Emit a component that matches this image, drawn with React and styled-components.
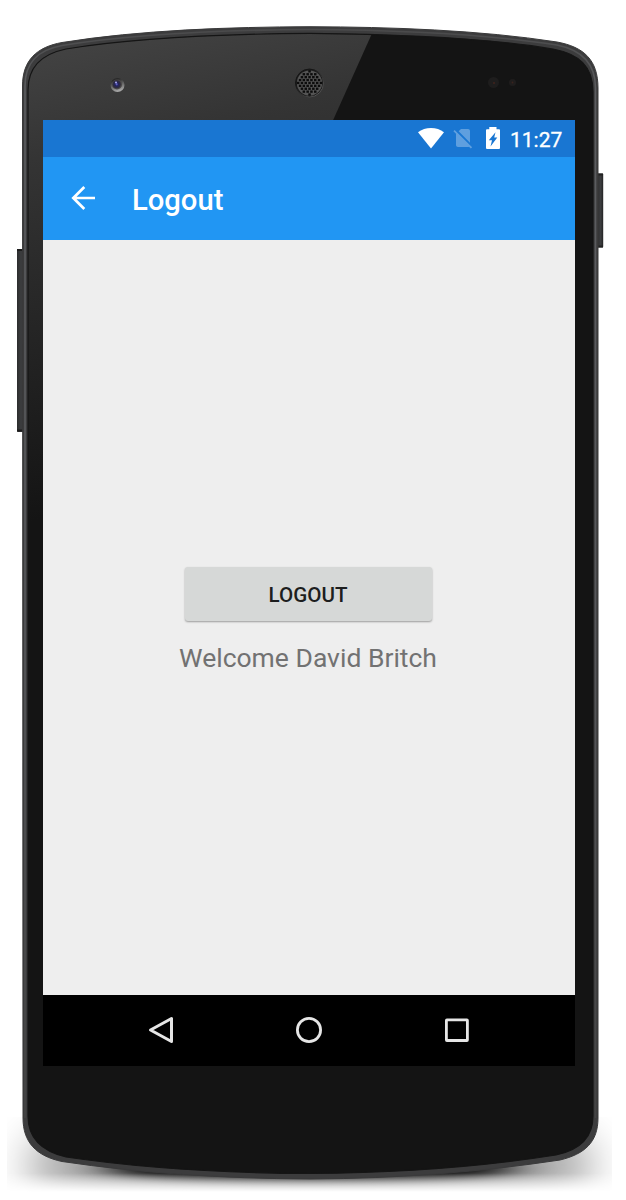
import React from "react";
import styled, { createGlobalStyle } from "styled-components";

const GlobalStyle = createGlobalStyle`
  * { box-sizing: border-box; }
  body { margin: 0; background: #fff; font-family: Roboto, "Liberation Sans", sans-serif; }
`;

const Phone = styled.main`
  display: grid;
  width: 626px;
  height: 1200px;
  overflow: hidden;
`;

const DeviceArt = styled.svg`
  grid-area: 1 / 1;
  display: block;
`;

const Screen = styled.section`
  grid-area: 1 / 1;
  z-index: 1;
  display: flex;
  flex-direction: column;
  width: 532px;
  height: 945.5px;
  margin: 120px 0 0 43px;
  background: #eee;
`;

const StatusBar = styled.div`
  display: flex;
  align-items: center;
  justify-content: flex-end;
  flex: 0 0 37px;
  padding-right: 12px;
  background: #1976d2;
  color: #fff;
`;

const Clock = styled.time`
  margin-left: 10px;
  padding-top: 2px;
  width: 53px;
  font-size: 21px;
  line-height: 24px;
  white-space: nowrap;
  -webkit-text-stroke: 0.3px #fff;
`;

const StatusIcon = styled.svg`
  display: block;
  flex: none;
  margin-left: ${(p) => p.$gap || 0}px;
  margin-bottom: 1px;
  opacity: ${(p) => (p.$dim ? 0.3 : 1)};
`;

const AppBar = styled.header`
  display: flex;
  align-items: center;
  flex: 0 0 83px;
  padding: 0 28px;
  background: #2196f3;
  color: #fff;
`;

const BackButton = styled.button`
  display: flex;
  padding: 0 0 2px;
  border: 0;
  background: none;
  color: inherit;
`;

const Title = styled.h1`
  margin: 3px 0 0 35px;
  font-size: 29.2px;
  font-weight: 500;
  line-height: 36px;
`;

const Content = styled.div`
  display: flex;
  flex-direction: column;
  align-items: center;
  flex: 1;
  padding: 327px 2px 0 0;
`;

const LogoutButton = styled.button`
  width: 247px;
  height: 54px;
  padding: 1px 0 0;
  border: 0;
  border-radius: 3px;
  background: #d6d8d7;
  box-shadow: 0 1px 2px rgba(0, 0, 0, 0.35);
  color: #1d1e1e;
  font-family: inherit;
  font-size: 20.6px;
  font-weight: 500;
`;

const Welcome = styled.p`
  margin: 21px 0 0;
  color: #727272;
  font-size: 26.5px;
  line-height: 32px;
  white-space: nowrap;
`;

const NavBar = styled.nav`
  display: flex;
  align-items: center;
  justify-content: center;
  gap: 118px;
  flex: 0 0 70.5px;
  padding-bottom: 1px;
  background: #000;
`;

const NavButton = styled.button`
  display: flex;
  padding: 0;
  border: 0;
  background: none;
`;

const body =
  "M22.5 86C22.5 60 37 47 62 42.5C140 30 230 27 310 26.7C390 27 480 30 557 42C584 47 598 60 598 88V1118C598 1142 585 1154 560 1160C480 1172 400 1178.5 310 1179C220 1178.5 140 1173 62 1161.5C36 1156 23 1142 23 1118Z";
const face =
  "M28 90C28 66 42 54 66 49C140 37 230 34 310 33.3C390 34 480 37 553 49C579 54 593 66 593 92V1116C593 1137 580 1150 556 1155C480 1167 400 1173 310 1173.5C220 1173 140 1168 66 1157C41 1151 28 1138 28 1116Z";

const grilleHoles = [];
for (let row = -4; row <= 4; row += 1) {
  for (let col = -4; col <= 4; col += 1) {
    const x = col * 3.8 + (row % 2 ? 1.9 : 0);
    const y = row * 2.9;
    if (Math.hypot(x, y) < 12) grilleHoles.push([x, y]);
  }
}

function Device() {
  return (
    <DeviceArt width="626" height="1200" viewBox="0 0 626 1200" aria-hidden="true">
      <defs>
        <linearGradient id="sheen" gradientUnits="userSpaceOnUse" x1="120" y1="20" x2="220" y2="480">
          <stop offset="0" stopColor="#444" />
          <stop offset=".25" stopColor="#343434" />
          <stop offset="1" stopColor="#141414" />
        </linearGradient>
        <linearGradient id="side">
          <stop offset="0" stopColor="#2b2c2d" />
          <stop offset=".6" stopColor="#3d3e40" />
          <stop offset="1" stopColor="#222" />
        </linearGradient>
        <radialGradient id="lens">
          <stop offset="0" stopColor="#6767d8" />
          <stop offset=".4" stopColor="#24245f" />
          <stop offset="1" stopColor="#302c38" />
        </radialGradient>
        <linearGradient id="lensRim" x1="0" y1="0" x2=".3" y2="1">
          <stop offset=".2" stopColor="#292929" />
          <stop offset="1" stopColor="#a5a5a5" />
        </linearGradient>
        <linearGradient id="grilleRim" x1="0" y1="0" x2="1" y2="1">
          <stop offset=".3" stopColor="#151515" />
          <stop offset="1" stopColor="#666" />
        </linearGradient>
        <linearGradient id="rim" gradientUnits="userSpaceOnUse" x1="0" y1="28" x2="0" y2="1118">
          <stop offset="0" stopColor="#4a4a4b" />
          <stop offset=".06" stopColor="#5c5d60" />
          <stop offset=".6" stopColor="#56575a" />
          <stop offset="1" stopColor="#444" />
        </linearGradient>
        <filter id="soft" x="-30%" y="-100%" width="160%" height="300%">
          <feGaussianBlur stdDeviation="22 5" />
        </filter>
        <filter id="wide" x="-30%" y="-100%" width="160%" height="300%">
          <feGaussianBlur stdDeviation="18 24" />
        </filter>
        <clipPath id="faceClip"><path d={face} /></clipPath>
        <linearGradient id="fade" x1="0" y1="0" x2="0" y2="1">
          <stop offset="0" stopColor="#fff" />
          <stop offset=".82" stopColor="#fff" />
          <stop offset="1" stopColor="#000" />
        </linearGradient>
        <mask id="shadowMask"><rect x="7" y="1088" width="605" height="104" fill="url(#fade)" /></mask>
      </defs>

      <g mask="url(#shadowMask)">
        <ellipse cx="310" cy="1165" rx="290" ry="40" fill="#000" opacity=".48" filter="url(#wide)" />
        <ellipse cx="310" cy="1169" rx="205" ry="13" fill="#000" opacity=".9" filter="url(#soft)" />
      </g>

      <rect x="17" y="249" width="7" height="183" rx="1" fill="url(#side)" />
      <path d="M17 250H23M17 430.500H23" stroke="#1d1d1d" strokeWidth="2" />
      <rect x="597" y="173.500" width="6.200" height="74" rx="1" fill="url(#side)" />
      <path d="M598 174.500H603M598 246.500H603" stroke="#222" strokeWidth="2" />

      <path d={body} fill="#3c3c3d" />
      <path d={body} fill="none" stroke="#3a3a3b" strokeWidth="1" />
      <path d="M25 1118V86C25 62 38 50 62 45.500C140 33 230 30 310 29.500C390 30 480 33 557 45C582 50 595.500 63 595.500 88V1118" fill="none" stroke="url(#rim)" strokeWidth="1.6" />
      <path d={face} fill="#141414" />
      <g clipPath="url(#faceClip)">
        <path d="M20 20H378L28 800H20Z" fill="url(#sheen)" />
      </g>
      <path d={face} fill="none" stroke="#151515" strokeWidth="1.200" />

      <circle cx="117.500" cy="85" r="7" fill="url(#lensRim)" />
      <circle cx="117" cy="84.500" r="5" fill="#4a4848" />
      <circle cx="116.700" cy="84.300" r="4" fill="url(#lens)" />
      <circle cx="116" cy="82.500" r="1" fill="#aaaaf0" />

      <circle cx="309.500" cy="83" r="14" fill="#1c1c1c" stroke="url(#grilleRim)" strokeWidth="1" />
      <circle cx="309.500" cy="83" r="12.600" fill="#555" />
      <g transform="translate(308.300 81.800)" fill="#0c0c0c">
        {grilleHoles.map(([x, y]) => (
          <rect key={x + "," + y} x={x} y={y} width="2.500" height="2.300" />
        ))}
      </g>

      <circle cx="493.500" cy="82.500" r="5.500" fill="#1e1d1d" />
      <circle cx="494" cy="83" r="1" fill="#42231c" />
      <circle cx="512.500" cy="82.500" r="3.500" fill="#1f1d1d" />
      <circle cx="512.500" cy="82.500" r=".9" fill="#3b231d" />
    </DeviceArt>
  );
}

export default function App() {
  return (
    <>
      <GlobalStyle />
      <Phone>
        <Device />
        <Screen>
          <StatusBar>
            <StatusIcon width="26" height="22" viewBox="0 0 26 22">
              <path d="M0 5.200C7 -.5 19 -.5 26 5.200L13 21.400Z" fill="#fff" />
            </StatusIcon>
            <StatusIcon width="24" height="24" viewBox="0 0 24 24" $gap={7} $dim>
              <path fill="#fff" d="M18.990 5c0-1.100-.89-2-1.990-2h-7L7.660 5.340 19 16.680 18.990 5zM3.650 3.880L2.380 5.150 5 7.770V19c0 1.100.9 2 2 2h10.010c.35 0 .67-.1.960-.26l1.880 1.880 1.270-1.270L3.650 3.880z" />
            </StatusIcon>
            <StatusIcon width="14" height="22" viewBox="0 0 14 22" $gap={11}>
              <path d="M3.300 0H10.500V2.200H13Q14 2.200 14 3.200V21Q14 22 13 22H1Q0 22 0 21V3.200Q0 2.200 1 2.200H3.300Z" fill="#fff" />
              <path d="M9.500 5.200L2.800 13.200H6L4.500 19.500L11.300 10.500H8.200Z" fill="#1976d2" />
            </StatusIcon>
            <Clock>11:27</Clock>
          </StatusBar>
          <AppBar>
            <BackButton aria-label="Back">
              <svg width="26" height="24" viewBox="0 0 26 24" fill="none" stroke="#fff" strokeWidth="2.700">
                <path d="M24 12H3M13.300 1L2.300 12L13.300 23" />
              </svg>
            </BackButton>
            <Title>Logout</Title>
          </AppBar>
          <Content>
            <LogoutButton>LOGOUT</LogoutButton>
            <Welcome>Welcome David Britch</Welcome>
          </Content>
          <NavBar>
            <NavButton aria-label="Back">
              <svg width="30" height="30" viewBox="0 0 30 30" fill="none" stroke="#e6e6e6" strokeWidth="3" strokeLinejoin="round">
                <path d="M25.500 3.500V26.500L4.500 15Z" />
              </svg>
            </NavButton>
            <NavButton aria-label="Home">
              <svg width="30" height="30" viewBox="0 0 30 30" fill="none" stroke="#e6e6e6" strokeWidth="2.800">
                <circle cx="15" cy="15" r="11.600" />
              </svg>
            </NavButton>
            <NavButton aria-label="Recent apps">
              <svg width="30" height="30" viewBox="0 0 30 30" fill="none" stroke="#e6e6e6" strokeWidth="2.800" strokeLinejoin="round">
                <rect x="4.400" y="4.900" width="21" height="20.600" rx=".5" />
              </svg>
            </NavButton>
          </NavBar>
        </Screen>
      </Phone>
    </>
  );
}
